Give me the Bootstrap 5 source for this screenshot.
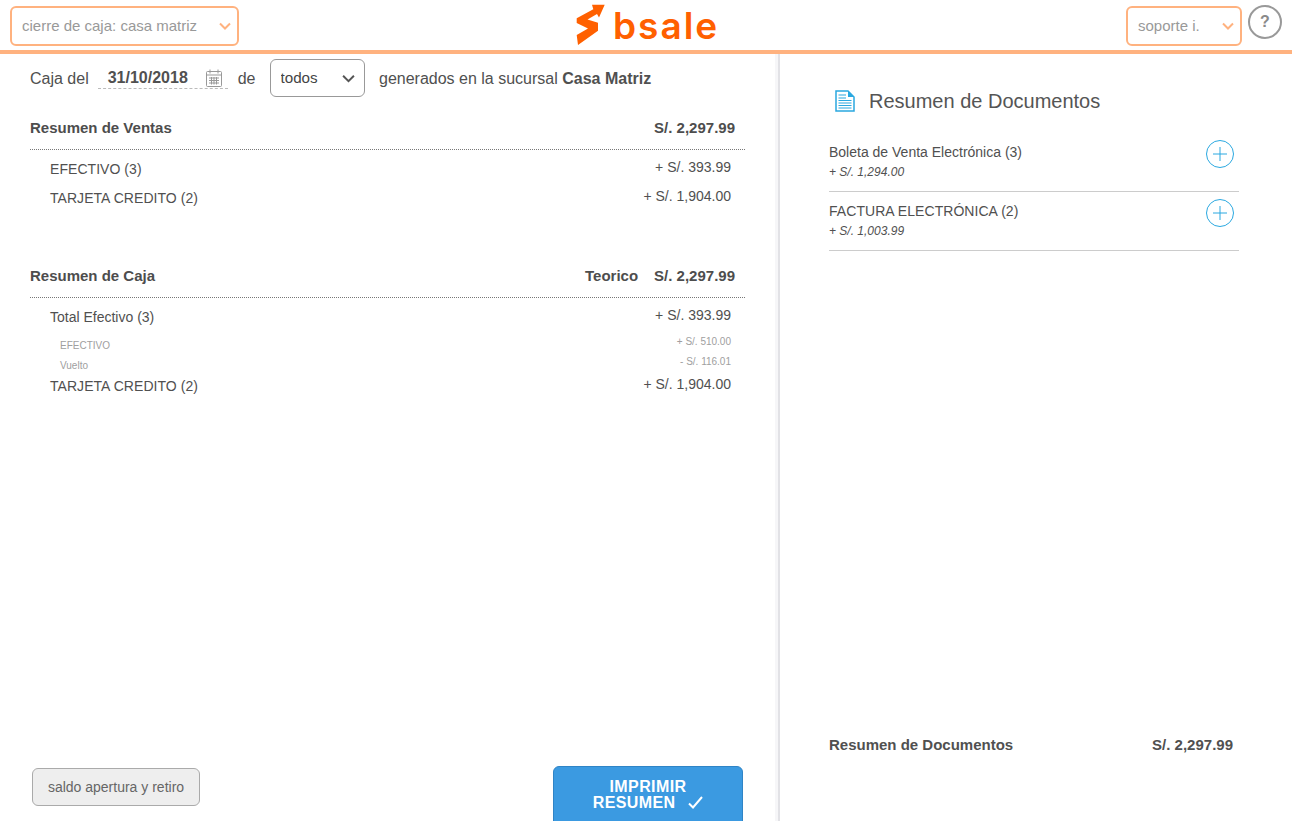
<!DOCTYPE html>
<html lang="es">
<head>
  <meta charset="UTF-8"/>
  <title>Bsale — Cierre de caja</title>
  <meta name="viewport" content="width=device-width, initial-scale=1"/>
  <link href="https://cdn.jsdelivr.net/npm/bootstrap@5.3.0/dist/css/bootstrap.min.css" rel="stylesheet"/>
  <style>
    html,body{height:100%;}
    body{font-family:"Liberation Sans",Arial,sans-serif;color:#505050;font-size:14px;overflow:hidden;background:#fff;}
    .app-top{height:54px;border-bottom:4px solid #ffb27f;padding:6px 10px 0 10px;}
    .top-select{--bs-form-select-bg-img:url("data:image/svg+xml,%3csvg xmlns='http://www.w3.org/2000/svg' viewBox='0 0 12 8'%3e%3cpath fill='none' stroke='%23ffb27f' stroke-width='2' d='M1 1.5l5 5 5-5'/%3e%3c/svg%3e");height:40px;border:2px solid #ffb27f;border-radius:6px;color:#999;font-size:15px;padding:0 20px 0 10px;background-position:right 6px center;background-size:12px 8px;box-shadow:none;}
    .sel-main{width:229px;}
    .sel-user{width:116px;}
    .help-dot{width:34px;height:34px;border:2px solid #999;border-radius:50%;color:#8a8a8a;font-weight:700;font-size:16px;margin-left:6px;margin-top:-1px;}
    .brand-mark{position:absolute;left:575px;top:3px;}
    .brand-word{position:absolute;left:613px;top:3px;font-family:Inter,sans-serif;font-weight:600;font-size:37px;line-height:45px;letter-spacing:2px;color:#ff6000;}
    .app-body{height:calc(100% - 54px);}
    .pane-left{width:778px;border-right:3px solid #f6f6f8;padding:5px 30px 0 30px;}
    .pane-right{width:514px;border-left:2px solid #e2e2e6;padding:0 53px 0 49px;}
    .filter-row{height:38px;font-size:16px;}
    .filter-row > span{padding-top:1px;}
    .date-box{width:130px;height:21px;margin:0 10px 0 9px;border-bottom:1px dashed #bbb;padding:0 6px 0 10px;font-weight:700;}
    .todos-select{--bs-form-select-bg-img:url("data:image/svg+xml,%3csvg xmlns='http://www.w3.org/2000/svg' viewBox='0 0 12 8'%3e%3cpath fill='none' stroke='%23555' stroke-width='1.800' d='M1 1.500l5 5 5-5'/%3e%3c/svg%3e");width:95px;height:38px;margin:0 14.500px 0 14px;border:1px solid #999;border-radius:6px;padding:0 24px 0 10px;font-size:15.200px;color:#444;background-position:right 9px center;background-size:13px 9px;box-shadow:none;}
    .sum-head{font-size:15px;font-weight:700;color:#4d4d4d;padding-right:10px;}
    .sec-one{margin-top:20px;}
    .sec-two{margin-top:57px;}
    .dot-line{border-top:1px dotted #777;margin-top:9px;}
    .dot-line.line-two{margin-top:10px;}
    .sum-row{padding:0 14px 0 20px;font-size:14px;line-height:20px;}
    .sum-row .amt{margin-top:-2px;}
    .row-a{margin-top:9px;}
    .row-b{margin-top:9px;}
    .sub-row{padding:0 14px 0 30px;font-size:10px;line-height:12px;color:#a0a0a0;}
    .sub-row .amt{margin-top:-4px;}
    .sub-a{margin-top:13px;}
    .sub-b{margin-top:8px;}
    .row-c{margin-top:4px;}
    .caps-text{letter-spacing:.05px;}
    .left-foot{padding:0 2px;}
    .btn-saldo{width:168px;height:38px;margin-bottom:15px;background:#eee;border:1px solid #aaa;border-radius:6px;color:#666;font-size:14px;padding:0;}
    .btn-print{width:190px;height:58px;margin-bottom:-3px;background:#3b9ae1;border:1px solid #2f84c6;border-radius:6px 6px 0 0;color:#fff;font-weight:700;font-size:16px;line-height:16px;letter-spacing:.4px;padding:0;}
    .btn-print svg{vertical-align:-1px;}
    .doc-title{font-size:20px;color:#555;margin:35px 0 0 6px;height:24px;gap:14px;}
    .doc-item{height:59px;border-bottom:1px solid #ccc;padding:0 5px 0 0;}
    .doc-list{margin-top:20px;}
    .doc-name{font-size:14px;line-height:18px;padding-top:10px;}
    .doc-sub{font-size:12px;font-style:italic;line-height:14px;margin-top:4px;}
    .plus-btn{width:28px;height:28px;margin-top:7px;}
    .doc-total{font-size:15px;font-weight:700;padding-right:6px;margin-bottom:65px;}
  </style>
</head>
<body>
<header class="app-top d-flex justify-content-between align-items-start position-relative">
  <select class="form-select top-select sel-main"><option>cierre de caja: casa matriz</option></select>
  <svg class="brand-mark" width="32" height="44" viewBox="0 0 32 44"><path fill="#ff6000" d="M1.700 15.300 18.300 6.300 17 1.700H29.700L24 14.500 22 11 12.500 16.500 23 19.700V27.700L3 42 1.700 32 13 25.500 1.700 20z"/></svg>
  <span class="brand-word">bsale</span>
  <div class="d-flex align-items-start">
    <select class="form-select top-select sel-user"><option>soporte i.</option></select>
    <div class="help-dot d-flex align-items-center justify-content-center">?</div>
  </div>
</header>
<main class="app-body d-flex">
  <section class="pane-left d-flex flex-column">
    <div class="filter-row d-flex align-items-center">
      <span>Caja del</span>
      <div class="date-box d-flex align-items-center justify-content-between">
        <span>31/10/2018</span>
        <svg width="16" height="18" viewBox="0 0 16 18" fill="none" stroke="#999"><rect x=".5" y="2.500" width="15" height="15" rx="1"/><path d="M.5 6h15M4 .5v4M12 .5v4M3 9h10M3 11.500h10M3 14h10M5.500 8v7.500M8 8v7.500M10.500 8v7.500"/></svg>
      </div>
      <span>de</span>
      <select class="form-select todos-select"><option>todos</option></select>
      <span>generados en la sucursal <b>Casa Matriz</b></span>
    </div>

    <div class="sum-head sec-one d-flex justify-content-between"><span>Resumen de Ventas</span><span>S/. 2,297.99</span></div>
    <div class="dot-line"></div>
    <div class="sum-row row-a d-flex justify-content-between"><span class="caps-text">EFECTIVO (3)</span><span class="amt">+ S/. 393.99</span></div>
    <div class="sum-row row-b d-flex justify-content-between"><span class="caps-text">TARJETA CREDITO (2)</span><span class="amt">+ S/. 1,904.00</span></div>

    <div class="sum-head sec-two d-flex justify-content-between"><span>Resumen de Caja</span><span class="d-flex gap-3"><span>Teorico</span><span>S/. 2,297.99</span></span></div>
    <div class="dot-line line-two"></div>
    <div class="sum-row row-a d-flex justify-content-between"><span>Total Efectivo (3)</span><span class="amt">+ S/. 393.99</span></div>
    <div class="sub-row sub-a d-flex justify-content-between"><span>EFECTIVO</span><span class="amt">+ S/. 510.00</span></div>
    <div class="sub-row sub-b d-flex justify-content-between"><span>Vuelto</span><span class="amt">- S/. 116.01</span></div>
    <div class="sum-row row-c d-flex justify-content-between"><span class="caps-text">TARJETA CREDITO (2)</span><span class="amt">+ S/. 1,904.00</span></div>

    <div class="left-foot mt-auto d-flex justify-content-between align-items-end">
      <button type="button" class="btn btn-saldo">saldo apertura y retiro</button>
      <button type="button" class="btn btn-print">IMPRIMIR<br/>RESUMEN
        <svg class="ms-2" width="15" height="13" viewBox="0 0 15 13" fill="none" stroke="#fff" stroke-width="2"><path d="M1 7.500l4 4L14 1"/></svg>
      </button>
    </div>
  </section>
  <section class="pane-right d-flex flex-column">
    <div class="doc-title d-flex align-items-center">
      <svg width="20" height="22" viewBox="0 0 20 22"><path fill="#fff" stroke="#2aa8e0" stroke-width="1.500" d="M1 1h12l6 6v14H1z"/><path fill="#2aa8e0" d="M13 1v6h6z"/><path stroke="#2aa8e0" stroke-width="1.200" d="M3.500 5H11M3.500 8H11M3.500 10.500h13M3.500 13h13M3.500 15.500h13M3.500 18h13"/></svg>
      <span>Resumen de Documentos</span>
    </div>
    <div class="doc-list">
      <div class="doc-item d-flex justify-content-between align-items-start">
        <div><div class="doc-name">Boleta de Venta Electrónica (3)</div><div class="doc-sub">+ S/. 1,294.00</div></div>
        <svg class="plus-btn" viewBox="0 0 28 28" fill="none" stroke="#2aa8e0"><circle cx="14" cy="14" r="13.500"/><path d="M14 7v14M7 14h14"/></svg>
      </div>
      <div class="doc-item d-flex justify-content-between align-items-start">
        <div><div class="doc-name caps-text">FACTURA ELECTRÓNICA (2)</div><div class="doc-sub">+ S/. 1,003.99</div></div>
        <svg class="plus-btn" viewBox="0 0 28 28" fill="none" stroke="#2aa8e0"><circle cx="14" cy="14" r="13.500"/><path d="M14 7v14M7 14h14"/></svg>
      </div>
    </div>
    <div class="doc-total mt-auto d-flex justify-content-between"><span>Resumen de Documentos</span><span>S/. 2,297.99</span></div>
  </section>
</main>
<script src="https://cdn.jsdelivr.net/npm/bootstrap@5.3.0/dist/js/bootstrap.bundle.min.js"></script>
</body>
</html>
